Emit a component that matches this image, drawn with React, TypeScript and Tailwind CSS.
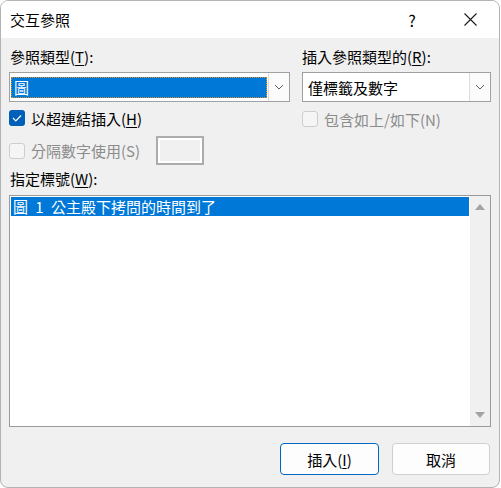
import React from "react";

const font = { fontFamily: '"Noto Sans CJK TC", "Noto Sans", sans-serif' };

function Chevron() {
  return (
    <svg width="10" height="6" viewBox="0 0 10 6" fill="none">
      <path d="M1 1l4 4 4-4" stroke="#5f5f5f" strokeWidth="1" />
    </svg>
  );
}

function Key({ k }: { k: string }) {
  return <span className="underline underline-offset-2">{k}</span>;
}

function CheckBox({ checked, disabled }: { checked?: boolean; disabled?: boolean }) {
  if (checked) {
    return (
      <span className="flex h-[16px] w-[16px] items-center justify-center rounded-[3px] bg-[#005fb8]">
        <svg width="10" height="8" viewBox="0 0 10 8" fill="none">
          <path d="M1 4l2.8 2.8L9 1.5" stroke="#fff" strokeWidth="1.2" />
        </svg>
      </span>
    );
  }
  return (
    <span
      className={
        disabled
          ? "h-[16px] w-[16px] rounded-[3px] border border-[#cdcdcd] bg-[#f5f5f5]"
          : "h-[16px] w-[16px] rounded-[3px] border border-[#8a8a8a] bg-white"
      }
    />
  );
}

export default function App() {
  return (
    <div className="h-[488px] w-[501px] bg-white text-[15px] text-black" style={font}>
      <div className="flex h-[488px] w-[500px] flex-col overflow-hidden rounded-[8px] border border-[#b4b4b4] bg-[#f0f0f0]">
        {/* Title bar */}
        <div className="flex h-[37px] shrink-0 items-center bg-white">
          <span className="pl-[9px] text-[15px] leading-none">交互參照</span>
          <div className="ml-auto flex h-full items-center pr-[6px]">
            <span className="flex h-full w-[46px] items-center justify-center text-[16px] leading-none">?</span>
            <span className="ml-[12px] flex h-full w-[46px] items-center justify-center">
              <svg width="13" height="13" viewBox="0 0 13 13">
                <path d="M0.5 0.5l12 12M12.5 0.5l-12 12" stroke="#1a1a1a" strokeWidth="1.1" />
              </svg>
            </span>
          </div>
        </div>

        <div className="flex flex-1 flex-col px-[8px]">
          {/* Top two columns */}
          <div className="mt-[9px] flex gap-[12px]">
            {/* Left column */}
            <div className="flex w-[281px] flex-col">
              <div className="h-[20px] pl-[1px] leading-[20px]">
                參照類型(<Key k="T" />):
              </div>
              <div className="mt-[5px] flex h-[30px] border border-[#a0a0a0] bg-white">
                <div className="flex flex-1 p-[1px] pt-[4px] pb-[3px]">
                  <div className="flex flex-1 items-center border border-dotted border-[#e08a2a] bg-[#0078d7] pl-[2px] leading-none text-white">
                    圖
                  </div>
                </div>
                <div className="flex w-[21px] items-center justify-center border-l border-[#dcdcdc] bg-[#fbfbfb]">
                  <Chevron />
                </div>
              </div>
              <div className="mt-[8px] flex h-[16px] items-center gap-[6px]">
                <CheckBox checked />
                <span className="leading-none">
                  以超連結插入(<Key k="H" />)
                </span>
              </div>
              <div className="mt-[10px] flex h-[29px] items-center">
                <CheckBox disabled />
                <span className="ml-[6px] leading-none text-[#8c8c8c]">分隔數字使用(S)</span>
                <div className="ml-[16px] h-[29px] w-[48px] border-2 border-[#acacac] bg-[#f0f0f0] shadow-[inset_0_0_0_2px_#ffffff]" />
              </div>
            </div>

            {/* Right column */}
            <div className="flex w-[189px] flex-col">
              <div className="h-[20px] leading-[20px]">
                插入參照類型的(<Key k="R" />):
              </div>
              <div className="mt-[5px] flex h-[30px] border border-[#a0a0a0] bg-white">
                <div className="flex flex-1 items-center pl-[5px] leading-none">僅標籤及數字</div>
                <div className="flex w-[21px] items-center justify-center border-l border-[#dcdcdc] bg-[#fbfbfb]">
                  <Chevron />
                </div>
              </div>
              <div className="mt-[9px] flex h-[16px] items-center gap-[6px]">
                <CheckBox disabled />
                <span className="leading-none text-[#8c8c8c]">包含如上/如下(N)</span>
              </div>
            </div>
          </div>

          {/* Caption list */}
          <div className="mt-[4px] h-[20px] pl-[1px] leading-[20px]">
            指定標號(<Key k="W" />):
          </div>
          <div className="mt-[6px] flex h-[232px] border border-[#9a9a9a] bg-white">
            <div className="flex-1 p-[1px]">
              <div className="flex h-[19px] items-center bg-[#0078d7] pl-[2px] leading-none text-white [word-spacing:4px]">
                圖 1 公主殿下拷問的時間到了
              </div>
            </div>
            <div className="flex w-[20px] flex-col items-center justify-between bg-[#f0f0f0] py-[8px]">
              <svg width="10" height="6" viewBox="0 0 10 6">
                <path d="M5 0L10 6H0z" fill="#a3a3a3" />
              </svg>
              <svg width="10" height="6" viewBox="0 0 10 6">
                <path d="M0 0h10L5 6z" fill="#a3a3a3" />
              </svg>
            </div>
          </div>

          {/* Buttons */}
          <div className="mt-[16px] flex justify-end gap-[13px] pr-[1px]">
            <button className="flex h-[32px] w-[99px] items-center justify-center rounded-[4px] border border-[#0067c0] bg-[#fdfdfd] leading-none">
              插入(<Key k="I" />)
            </button>
            <button className="flex h-[32px] w-[98px] items-center justify-center rounded-[4px] border border-[#d0d0d0] bg-[#fdfdfd] leading-none">
              取消
            </button>
          </div>
        </div>
      </div>
    </div>
  );
}
